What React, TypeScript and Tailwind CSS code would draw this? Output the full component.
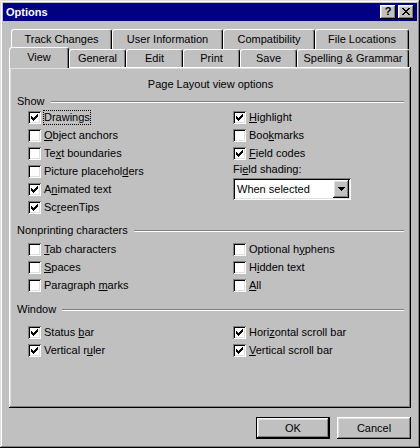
import * as React from 'react';

const raised =
  'shadow-[inset_-1px_-1px_#000,inset_1px_1px_#fff,inset_-2px_-2px_#808080,inset_2px_2px_#dfdfdf]';
const sunken =
  'shadow-[inset_1px_1px_#808080,inset_-1px_-1px_#fff,inset_2px_2px_#000,inset_-2px_-2px_#dfdfdf]';

function Mnemonic({ text }: { text: string }) {
  const i = text.indexOf('&');
  if (i < 0) return <>{text}</>;
  return (
    <>
      {text.slice(0, i)}
      <u className="underline-offset-[1px]">{text[i + 1]}</u>
      {text.slice(i + 2)}
    </>
  );
}

function CheckMark() {
  return (
    <svg width="7" height="7" viewBox="0 0 7 7" shapeRendering="crispEdges">
      <path
        d="M6 0h1v1h-1zM5 1h2v1h-2zM0 2h1v1h-1zM4 2h3v1h-3zM0 3h2v1h-2zM3 3h3v1h-3zM0 4h5v1h-5zM1 5h3v1h-3zM2 6h1v1h-1z"
        fill="#000"
      />
    </svg>
  );
}

function Check(props: { label: string; checked?: boolean; focused?: boolean }) {
  return (
    <div className="flex h-[18px] items-center">
      <span className={`flex h-[13px] w-[13px] shrink-0 items-center justify-center bg-white ${sunken}`}>
        {props.checked && <CheckMark />}
      </span>
      <span
        className={`ml-[2px] border leading-[13px] ${
          props.focused ? 'border-dotted border-black' : 'border-transparent'
        }`}
      >
        <Mnemonic text={props.label} />
      </span>
    </div>
  );
}

function Group({ title, className = '' }: { title: string; className?: string }) {
  return (
    <div className={`flex h-[13px] items-center ${className}`}>
      <span className="leading-[13px]">{title}</span>
      <div className="ml-[6px] h-[2px] flex-1 border-t border-b border-t-[#808080] border-b-white" />
    </div>
  );
}

function Tab(props: { label: string; width: string; selected?: boolean; tall?: boolean }) {
  return (
    <div
      className={`flex items-center justify-center rounded-t-[3px] border-t border-l border-r border-t-white border-l-white border-r-black bg-[#c0c0c0] shadow-[inset_-1px_0_#808080] ${
        props.width
      } ${props.selected ? 'relative z-10 -mb-px h-[21px] pb-[2px]' : props.tall ? 'h-[20px]' : 'h-[18px]'}`}
    >
      {props.label}
    </div>
  );
}

function Button(props: { label: string; isDefault?: boolean }) {
  return (
    <div
      className={`flex h-[22px] w-[74px] items-center justify-center bg-[#c0c0c0] ${
        props.isDefault ? 'border border-black' : ''
      }`}
    >
      <div className={`flex h-full w-full items-center justify-center ${raised}`}>{props.label}</div>
    </div>
  );
}

export default function App() {
  return (
    <div
      className={`flex h-[448px] w-[420px] flex-col bg-[#c0c0c0] p-[3px] font-['Liberation_Sans',Arial,sans-serif] text-[11px] text-black ${'shadow-[inset_-1px_-1px_#000,inset_1px_1px_#dfdfdf,inset_-2px_-2px_#808080,inset_2px_2px_#fff]'}`}
    >
      {/* title bar */}
      <div className="flex h-[18px] items-center bg-[#000080] pl-[3px] pr-[3px]">
        <span className="flex-1 font-bold leading-[13px] text-white">Options</span>
        <div className={`flex h-[14px] w-[16px] items-center justify-center bg-[#c0c0c0] ${raised}`}>
          <span className="-mt-px text-[11px] font-bold leading-none">?</span>
        </div>
        <div className={`ml-[2px] flex h-[14px] w-[16px] items-center justify-center bg-[#c0c0c0] ${raised}`}>
          <svg width="8" height="7" viewBox="0 0 8 7" shapeRendering="crispEdges" className="-mt-px">
            <path
              d="M0 0h2v1h-2zM6 0h2v1h-2zM1 1h2v1h-2zM5 1h2v1h-2zM2 2h4v1h-4zM3 3h2v1h-2zM2 4h4v1h-4zM1 5h2v1h-2zM5 5h2v1h-2zM0 6h2v1h-2zM6 6h2v1h-2z"
              fill="#000"
            />
          </svg>
        </div>
      </div>

      <div className="flex flex-col px-[6px]">
        {/* back row of tabs */}
        <div className="mt-[8px] flex pl-[2px]">
          <Tab label="Track Changes" width="w-[101px]" tall />
          <Tab label="User Information" width="w-[111px]" tall />
          <Tab label="Compatibility" width="w-[92px]" tall />
          <Tab label="File Locations" width="w-[94px]" tall />
        </div>
        {/* front row of tabs */}
        <div className="-mt-[2px] flex h-[20px] items-end">
          <Tab label="View" width="w-[60px]" selected />
          <Tab label="General" width="w-[57px]" />
          <Tab label="Edit" width="w-[57px]" />
          <Tab label="Print" width="w-[57px]" />
          <Tab label="Save" width="w-[57px]" />
          <Tab label="Spelling & Grammar" width="w-[112px]" />
        </div>

        {/* panel */}
        <div
          className={`flex h-[341px] flex-col pt-[11px] pl-[8px] pr-[7px] ${'shadow-[inset_-1px_-1px_#000,inset_1px_1px_#fff,inset_-2px_-2px_#808080,inset_2px_2px_#dfdfdf]'}`}
        >
          <div className="text-center leading-[13px]">Page Layout view options</div>

          <Group title="Show" className="mt-[4px]" />
          <div className="grid grid-cols-[205px_1fr] pl-[11px]">
            <div>
              <Check label="Drawin&gs" checked focused />
              <Check label="&Object anchors" />
              <Check label="Te&xt boundaries" />
              <Check label="Picture placehol&ders" />
              <Check label="A&nimated text" checked />
              <Check label="Sc&reenTips" checked />
            </div>
            <div>
              <Check label="&Highlight" checked />
              <Check label="Boo&kmarks" />
              <Check label="&Field codes" checked />
              <div className="mt-px leading-[13px]">
                <Mnemonic text="Fi&eld shading:" />
              </div>
              <div className={`mt-[2px] flex h-[22px] w-[118px] bg-white p-[2px] ${sunken}`}>
                <span className="flex-1 pl-[2px] leading-[18px]">When selected</span>
                <span className={`flex h-[18px] w-[16px] items-center justify-center bg-[#c0c0c0] ${raised}`}>
                  <svg width="7" height="4" viewBox="0 0 7 4" shapeRendering="crispEdges">
                    <path d="M0 0h7v1h-7zM1 1h5v1h-5zM2 2h3v1h-3zM3 3h1v1h-1z" fill="#000" />
                  </svg>
                </span>
              </div>
            </div>
          </div>

          <Group title="Nonprinting characters" className="mt-[8px]" />
          <div className="mt-[3px] grid grid-cols-[205px_1fr] pl-[11px]">
            <div>
              <Check label="&Tab characters" />
              <Check label="&Spaces" />
              <Check label="Paragraph &marks" />
            </div>
            <div>
              <Check label="Optional h&yphens" />
              <Check label="H&idden text" />
              <Check label="&All" />
            </div>
          </div>

          <Group title="Window" className="mt-[9px]" />
          <div className="mt-[7px] grid grid-cols-[205px_1fr] pl-[11px]">
            <div>
              <Check label="Status &bar" checked />
              <Check label="Vertical r&uler" checked />
            </div>
            <div>
              <Check label="Hori&zontal scroll bar" checked />
              <Check label="&Vertical scroll bar" checked />
            </div>
          </div>
        </div>

        {/* buttons */}
        <div className="mt-[9px] flex justify-end gap-[7px]">
          <Button label="OK" isDefault />
          <Button label="Cancel" />
        </div>
      </div>
    </div>
  );
}
